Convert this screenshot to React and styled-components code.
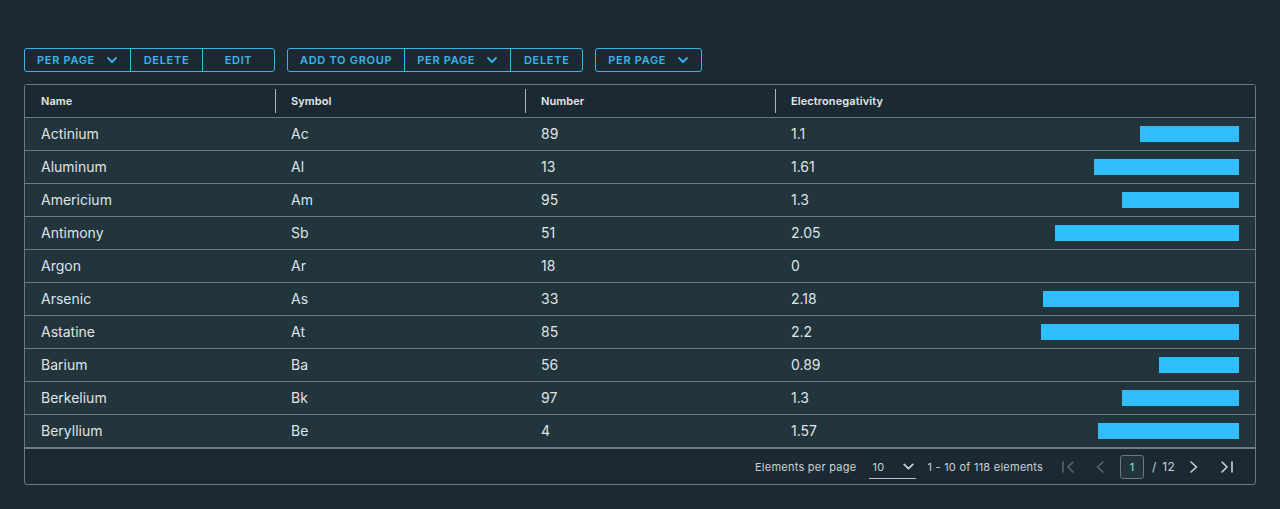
import React from "react";
import styled, { createGlobalStyle } from "styled-components";

const Global = createGlobalStyle`
  html, body { margin: 0; padding: 0; background: #1b2a32; }
  body { font-family: Inter, "Noto Sans", sans-serif; color: #e9ecef; }
`;

const Page = styled.div`
  padding: 48px 24px 25px 24px;
  display: flex;
  flex-direction: column;
  gap: 12px;
`;

const Toolbar = styled.div`
  display: flex;
  gap: 12px;
  height: 24px;
`;

const BtnGroup = styled.div`
  display: flex;
  border: 1px solid #3bb2ea;
  border-radius: 3px;
  height: 22px;
`;

const Btn = styled.button`
  display: flex;
  align-items: center;
  justify-content: center;
  gap: 11px;
  min-width: 47px;
  height: 22px;
  padding: 0 12px;
  background: transparent;
  border: none;
  border-left: ${(p) => (p.$first ? "none" : "1px solid #3bb2ea")};
  color: #3bb2ea;
  font-family: Inter, sans-serif;
  font-size: 11px;
  font-weight: 600;
  letter-spacing: 0.7px;
  text-transform: uppercase;
  cursor: pointer;
  box-sizing: content-box;
`;

const Chevron = ({ size = 12, color = "currentColor", sw = 1.8 }) => (
  <svg width={size} height={size} viewBox="0 0 12 12" fill="none">
    <path d="M2 4 L6 8 L10 4" stroke={color} strokeWidth={sw} strokeLinecap="round" strokeLinejoin="round" />
  </svg>
);

const Grid = styled.div`
  border: 1px solid #6a7a83;
  border-radius: 3px;
  overflow: hidden;
  display: flex;
  flex-direction: column;
`;

const Row = styled.div`
  display: grid;
  grid-template-columns: 250px 250px 250px 1fr;
  height: 32px;
  background: ${(p) => (p.$head ? "#1b2a32" : "#22343c")};
  border-bottom: ${(p) => (p.$last ? "2px" : "1px")} solid #6a7a83;
`;

const HeadCell = styled.div`
  position: relative;
  display: flex;
  align-items: center;
  padding-left: 16px;
  font-size: 11px;
  font-weight: 600;
  color: #e3e7ea;
  letter-spacing: 0.1px;
  &::before {
    content: "";
    display: ${(p) => (p.$sep ? "block" : "none")};
    position: absolute;
    left: 0;
    top: 4px;
    bottom: 4px;
    width: 1px;
    background: #a9b5bc;
  }
`;

const Cell = styled.div`
  display: flex;
  align-items: center;
  padding: 0 16px 1px 16px;
  font-size: 14px;
  color: #dfe4e7;
  justify-content: space-between;
`;

const Bar = styled.div`
  height: 16px;
  margin-top: 1px;
  background: #30bdfc;
`;

const Footer = styled.div`
  height: 35px;
  display: flex;
  align-items: center;
  justify-content: flex-end;
  padding-right: 22px;
  font-size: 11px;
  letter-spacing: 0.25px;
  color: #c9d1d6;
`;

const Label = styled.span`
  margin-right: 13px;
`;

const Select = styled.div`
  display: flex;
  align-items: center;
  justify-content: space-between;
  width: 43px;
  height: 22px;
  padding: 0 1px 0 3px;
  margin-top: 1px;
  border-bottom: 1px solid #b6c1c7;
  margin-right: 11px;
  color: #c9d1d6;
`;

const Range = styled.span`
  margin-right: ${(p) => p.$mr}px;
`;

const IconBtn = styled.span`
  display: flex;
  align-items: center;
  justify-content: center;
  margin-right: ${(p) => p.$mr || 0}px;
  color: ${(p) => (p.$disabled ? "#56666f" : "#c9d1d6")};
`;

const PageInput = styled.div`
  width: 22px;
  height: 22px;
  border: 1px solid #6a7a83;
  border-radius: 3px;
  background: #22343c;
  display: flex;
  align-items: center;
  justify-content: center;
  margin-right: 8px;
  font-size: 11px;
`;

const Total = styled.span`
  margin-right: 15px;
  font-size: 12px;
  word-spacing: 2px;
`;

const data = [
  ["Actinium", "Ac", 89, "1.1"],
  ["Aluminum", "Al", 13, "1.61"],
  ["Americium", "Am", 95, "1.3"],
  ["Antimony", "Sb", 51, "2.05"],
  ["Argon", "Ar", 18, "0"],
  ["Arsenic", "As", 33, "2.18"],
  ["Astatine", "At", 85, "2.2"],
  ["Barium", "Ba", 56, "0.89"],
  ["Berkelium", "Bk", 97, "1.3"],
  ["Beryllium", "Be", 4, "1.57"],
];

const FirstIcon = () => (
  <svg width="12" height="14" viewBox="0 0 12 14" fill="none" stroke="currentColor" strokeWidth="1.6" strokeLinecap="round" strokeLinejoin="round">
    <path d="M1 2 V12" />
    <path d="M11 2 L6 7 L11 12" />
  </svg>
);
const LastIcon = () => (
  <svg width="12" height="14" viewBox="0 0 12 14" fill="none" stroke="currentColor" strokeWidth="1.6" strokeLinecap="round" strokeLinejoin="round">
    <path d="M11 2 V12" />
    <path d="M1 2 L6 7 L1 12" />
  </svg>
);
const PrevIcon = () => (
  <svg width="8" height="14" viewBox="0 0 8 14" fill="none" stroke="currentColor" strokeWidth="1.6" strokeLinecap="round" strokeLinejoin="round">
    <path d="M7 2 L1.5 7 L7 12" />
  </svg>
);
const NextIcon = () => (
  <svg width="8" height="14" viewBox="0 0 8 14" fill="none" stroke="currentColor" strokeWidth="1.6" strokeLinecap="round" strokeLinejoin="round">
    <path d="M1 2 L6.5 7 L1 12" />
  </svg>
);

export default function App() {
  return (
    <>
      <Global />
      <Page>
        <Toolbar>
          <BtnGroup>
            <Btn $first>
              Per page <Chevron />
            </Btn>
            <Btn>Delete</Btn>
            <Btn>Edit</Btn>
          </BtnGroup>
          <BtnGroup>
            <Btn $first>Add to group</Btn>
            <Btn>
              Per page <Chevron />
            </Btn>
            <Btn>Delete</Btn>
          </BtnGroup>
          <BtnGroup>
            <Btn $first>
              Per page <Chevron />
            </Btn>
          </BtnGroup>
        </Toolbar>
        <Grid>
          <Row $head>
            <HeadCell>Name</HeadCell>
            <HeadCell $sep>Symbol</HeadCell>
            <HeadCell $sep>Number</HeadCell>
            <HeadCell $sep>Electronegativity</HeadCell>
          </Row>
          {data.map(([n, s, num, e], i) => (
            <Row key={n} $last={i === data.length - 1}>
              <Cell>{n}</Cell>
              <Cell>{s}</Cell>
              <Cell>{num}</Cell>
              <Cell>
                <span>{e}</span>
                <Bar style={{ width: `${Math.round(parseFloat(e) * 90)}px` }} />
              </Cell>
            </Row>
          ))}
          <Footer>
            <Label>Elements per page</Label>
            <Select>
              <span>10</span>
              <Chevron size={13} sw={1.6} />
            </Select>
            <Range $mr={19}>1 - 10 of 118 elements</Range>
            <IconBtn $disabled $mr={22}>
              <FirstIcon />
            </IconBtn>
            <IconBtn $disabled $mr={16}>
              <PrevIcon />
            </IconBtn>
            <PageInput>1</PageInput>
            <Total>/ 12</Total>
            <IconBtn $mr={23}>
              <NextIcon />
            </IconBtn>
            <IconBtn>
              <LastIcon />
            </IconBtn>
          </Footer>
        </Grid>
      </Page>
    </>
  );
}
